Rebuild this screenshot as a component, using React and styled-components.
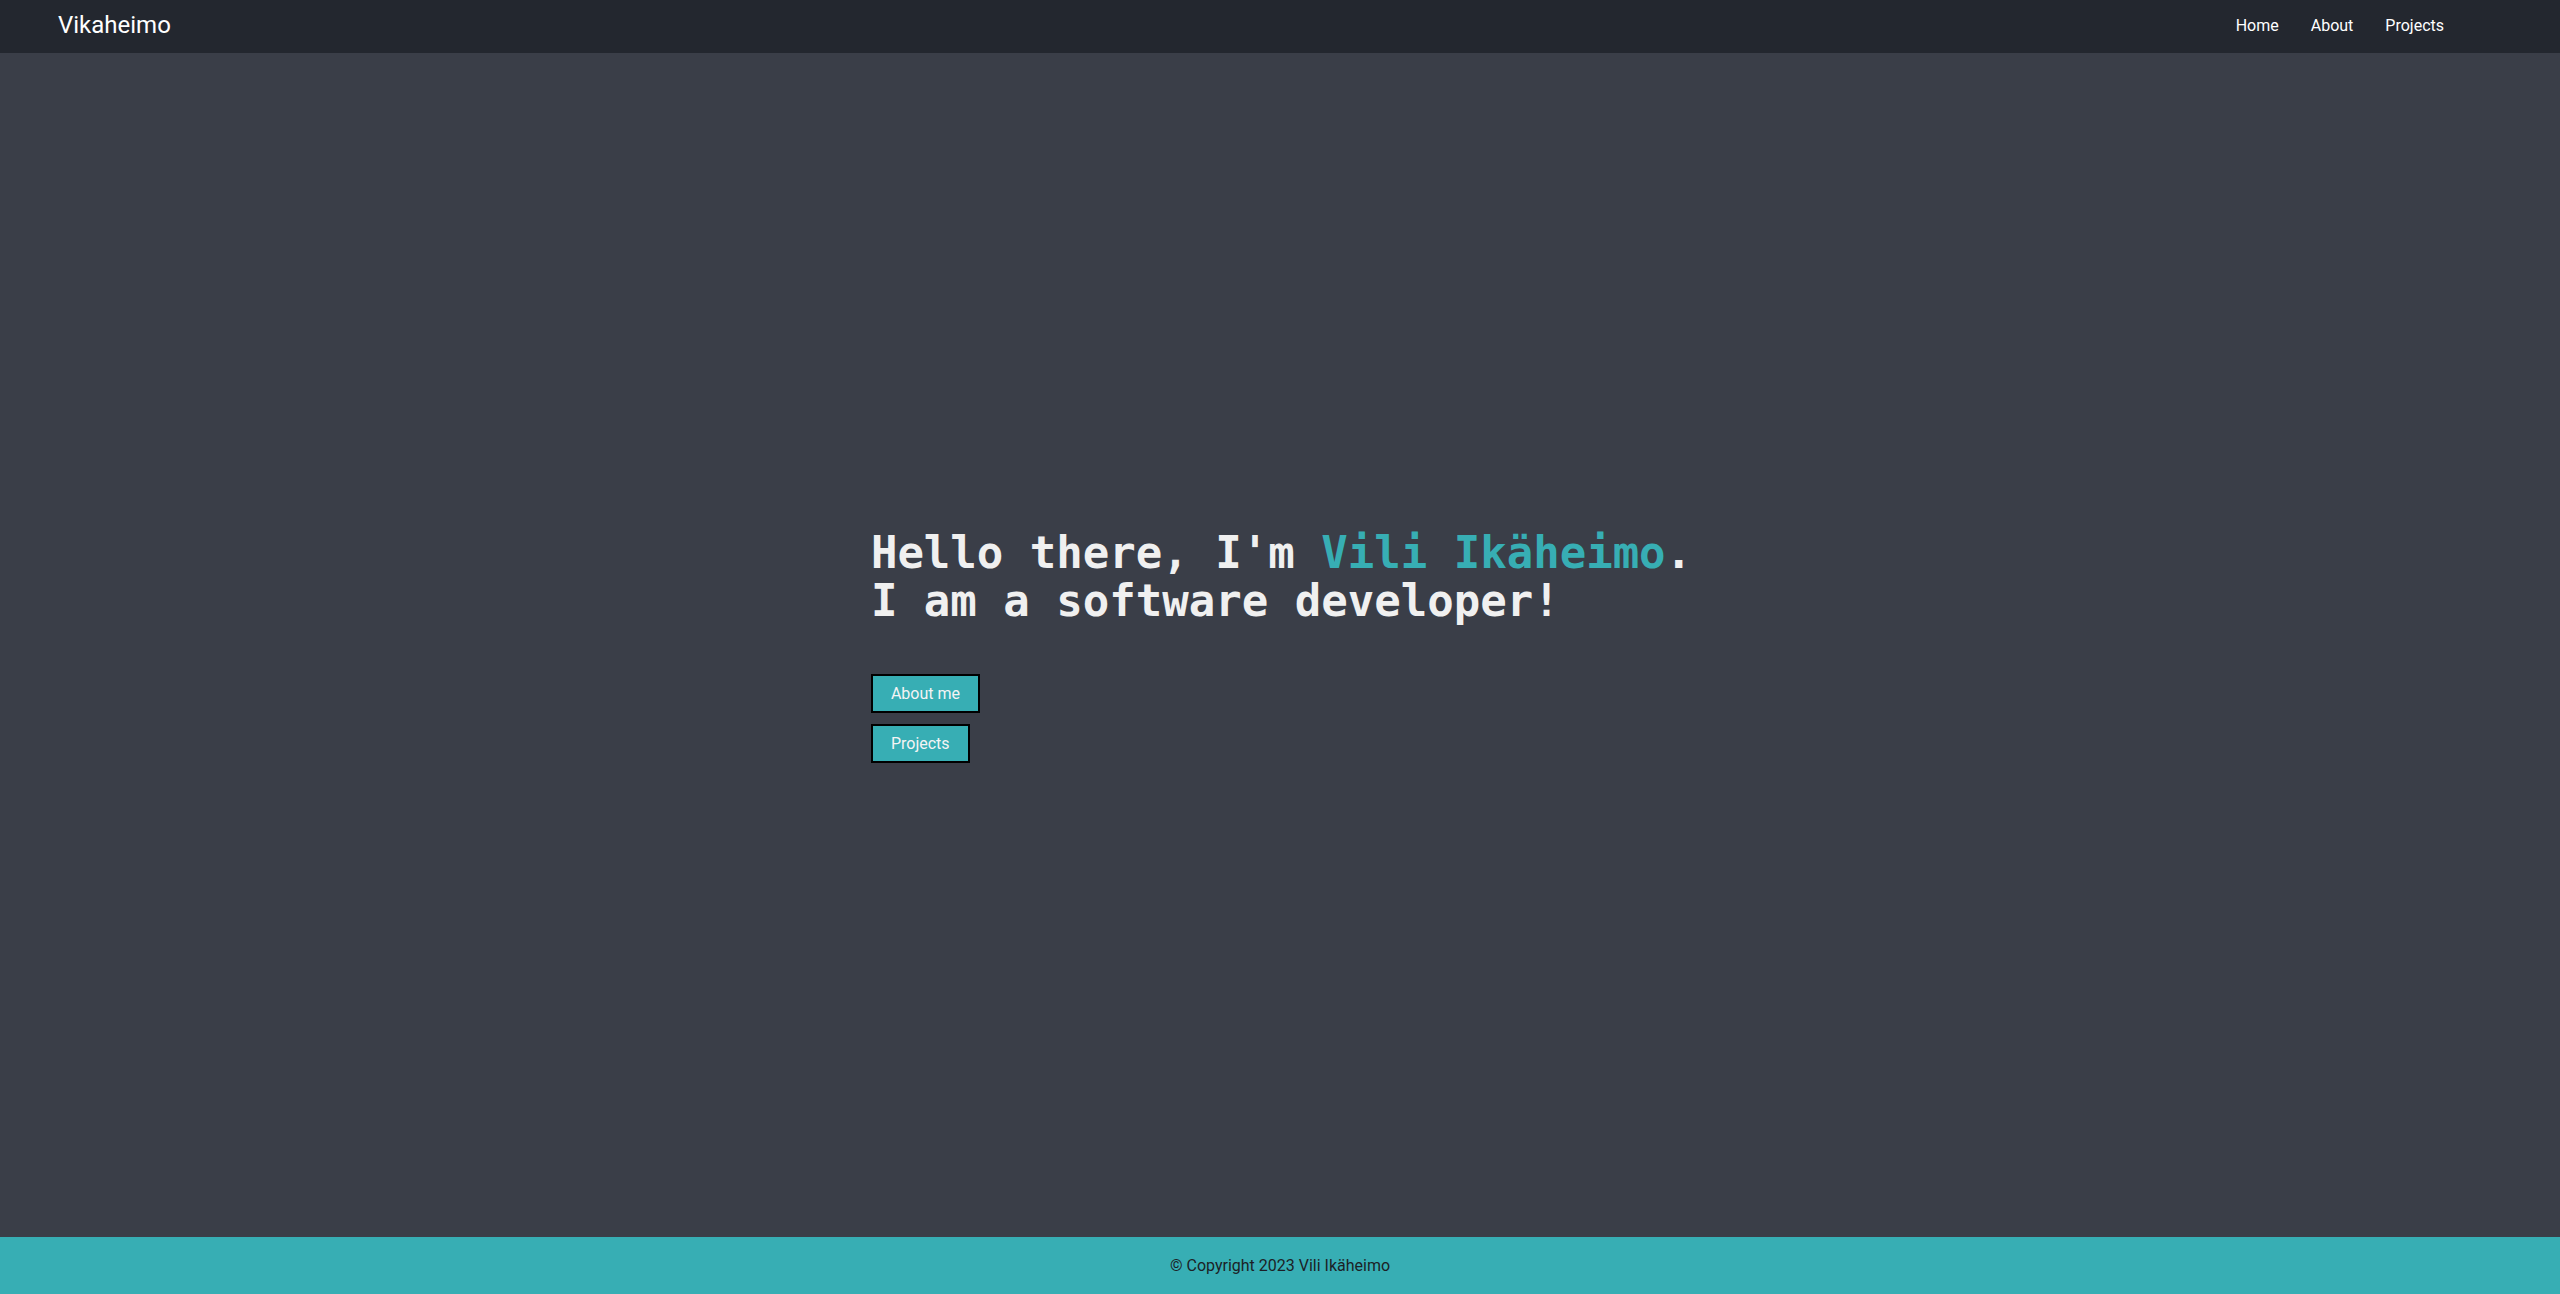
import React from 'react';
import styled, { createGlobalStyle } from 'styled-components';

const GlobalStyle = createGlobalStyle`
	html, body {
		margin: 0;
		padding: 0;
		height: 100%;
	}
	body {
		font-family: Roboto, "Liberation Sans", Arial, sans-serif;
		background-color: #3a3e48;
	}
	#root {
		height: 100%;
	}
`;

const Page = styled.div`
	height: 100vh;
	display: flex;
	flex-direction: column;
`;

const Navbar = styled.nav`
	height: 53px;
	flex-shrink: 0;
	box-sizing: border-box;
	background-color: #23272f;
	display: flex;
	align-items: center;
	justify-content: space-between;
	padding: 0 100px 3px 58px;
`;

const Brand = styled.a`
	color: #ffffff;
	font-size: 24px;
	text-decoration: none;
`;

const NavLinks = styled.div`
	display: flex;
	align-items: center;
`;

const NavLink = styled.a`
	color: #ffffff;
	font-size: 16px;
	padding: 0 16px;
	text-decoration: none;
`;

const Main = styled.main`
	flex: 1;
	display: flex;
	align-items: center;
	justify-content: center;
`;

const Hero = styled.div`
	display: flex;
	flex-direction: column;
	align-items: flex-start;
	padding: 2px 0 0 3px;
`;

const Heading = styled.h1`
	margin: 0 0 49px 0;
	font-family: "DejaVu Sans Mono", "Liberation Mono", monospace;
	font-weight: bold;
	font-size: 44px;
	line-height: 48px;
	color: #f0f0f0;
`;

const Name = styled.span`
	color: #37aeb4;
`;

const Buttons = styled.div`
	display: flex;
	flex-direction: column;
	align-items: flex-start;
	gap: 11px;
`;

const Button = styled.a`
	display: inline-block;
	box-sizing: border-box;
	height: 39px;
	padding: 0 18px;
	line-height: 35px;
	border: 2px solid #000000;
	background-color: #37aeb4;
	color: #f4f4f4;
	font-size: 16px;
	text-decoration: none;
`;

const Footer = styled.footer`
	height: 57px;
	flex-shrink: 0;
	background-color: #37aeb4;
	display: flex;
	align-items: center;
	justify-content: center;
	color: #1c1f26;
	font-size: 16px;
`;

const App = () => {
	return (
		<Page>
			<GlobalStyle />
			<Navbar>
				<Brand href="#">Vikaheimo</Brand>
				<NavLinks>
					<NavLink href="#">Home</NavLink>
					<NavLink href="#">About</NavLink>
					<NavLink href="#">Projects</NavLink>
				</NavLinks>
			</Navbar>
			<Main>
				<Hero>
					<Heading>
						Hello there, I'm <Name>Vili Ikäheimo</Name>.
						<br />
						I am a software developer!
					</Heading>
					<Buttons>
						<Button href="#">About me</Button>
						<Button href="#">Projects</Button>
					</Buttons>
				</Hero>
			</Main>
			<Footer>© Copyright 2023 Vili Ikäheimo</Footer>
		</Page>
	);
};

export default App;
